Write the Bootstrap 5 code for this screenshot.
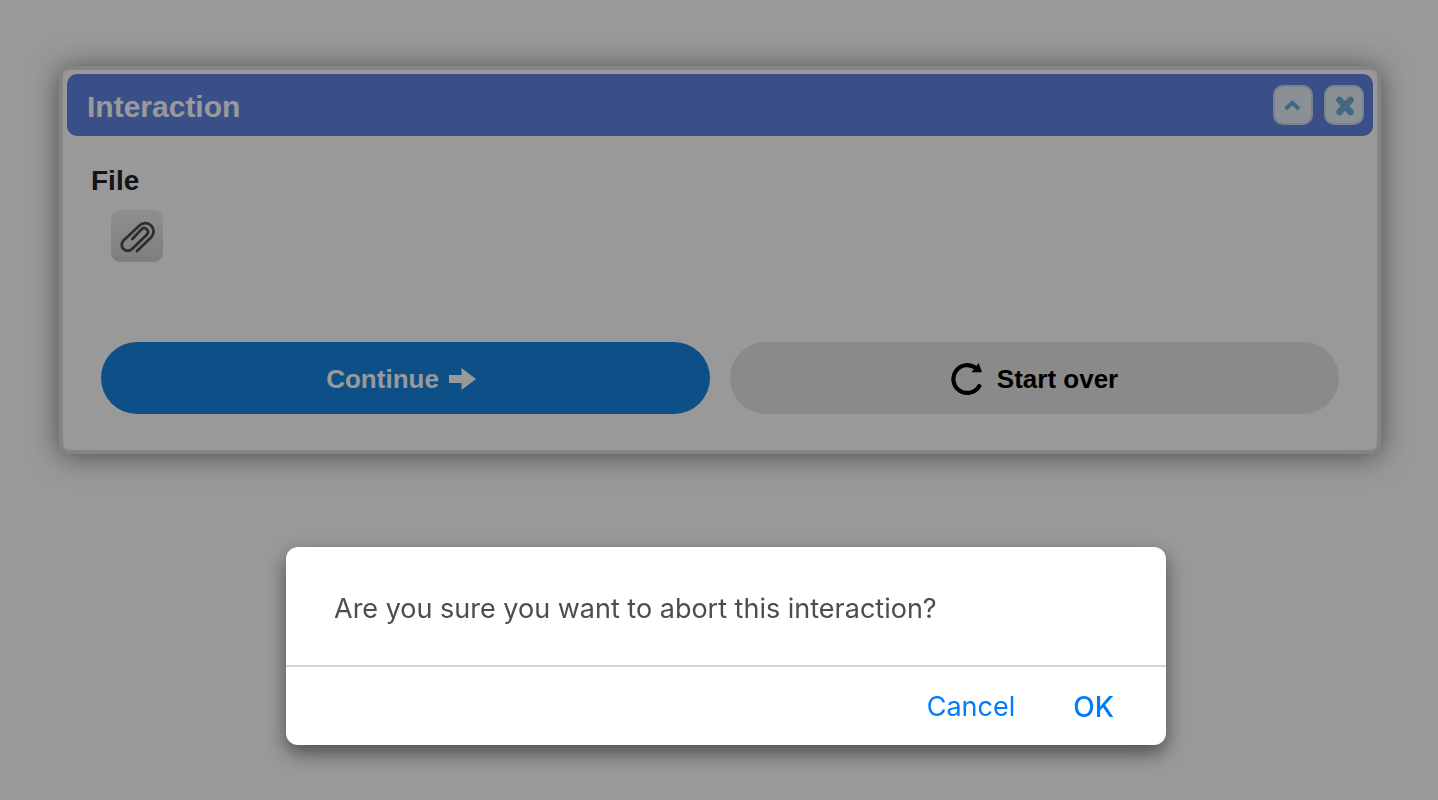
<!DOCTYPE html>
<html lang="en">
<head>
<meta charset="utf-8">
<meta name="viewport" content="width=device-width, initial-scale=1">
<title>Interaction</title>
<link href="https://cdn.jsdelivr.net/npm/bootstrap@5.3.0/dist/css/bootstrap.min.css" rel="stylesheet">
<style>
  body { background: #fff; font-family: "Liberation Sans", Arial, sans-serif; }
  .page-wrap { padding: 66px 57px 66px 59px; }
  .panel { border: 4px solid #dcdcdc; border-radius: 10px; padding: 4px; box-shadow: 0 2px 28px rgba(0,0,0,.5); }
  .panel-head { background: #6184e1; border-radius: 10px; height: 62px; padding: 0 9px 0 20px; }
  .panel-title { font-size: 30px; line-height: 36px; padding-top: 3px; color: #fff; }
  .tools { gap: 11px; }
  .tool-btn { width: 40px; height: 40px; border: 2px solid #c5dbec; border-radius: 10px; background: #e6f1f9; }
  .panel-main { padding: 27px 24px 32px; }
  .file-label { font-size: 28px; line-height: 36px; color: #222; }
  .attach { width: 52px; height: 52px; margin: 11px 20px 0; border: 0; border-radius: 9px; background: linear-gradient(#efefef, #d2d2d2); }
  .actions { gap: 20px; padding: 0 10px; margin-top: 80px; }
  .action { height: 72px; font-size: 26px; border: 0; padding: 8px 12px 6px; }
  .action-go, .action-go:hover { background: #1784e1; color: #fff; gap: 10px; padding-right: 21px; }
  .action-again, .action-again:hover { background: #e6e6e6; color: #000; gap: 14px; }
  .shade { background: rgba(0,0,0,.4); z-index: 10; }
  .dialog-area { z-index: 20; padding: 0 0 55px 14px; }
  .ask { width: 880px; max-width: 100%; background: #fff; border-radius: 12px; box-shadow: 0 8px 20px rgba(0,0,0,.5); font-family: Inter, "Liberation Sans", sans-serif; font-size: 27px; line-height: 36px; }
  .ask-text { padding: 44px 48px 38px; color: #4d4d4d; }
  .ask-foot { border-top: 2px solid #d4d4d4; padding: 22px 52px 20px; gap: 58px; }
  .ask-btn { background: none; border: 0; padding: 0; color: #007aff; }
  .ask-ok { font-weight: 500; font-size: 28px; }
</style>
</head>
<body>
<main class="page-wrap">
  <section class="panel bg-white">
    <header class="panel-head d-flex align-items-center justify-content-between">
      <h1 class="panel-title fw-bold m-0">Interaction</h1>
      <div class="tools d-flex">
        <button type="button" class="tool-btn d-flex align-items-center justify-content-center p-0" aria-label="Collapse">
          <svg width="36" height="36" viewBox="0 0 36 36" fill="none" stroke="#70b0d8" stroke-width="4"><path d="M10.500 22L17.200 15.800L24 22"/></svg>
        </button>
        <button type="button" class="tool-btn d-flex align-items-center justify-content-center p-0" aria-label="Close">
          <svg width="36" height="36" viewBox="0 0 36 36" fill="none" stroke="#70b0d8" stroke-width="6.500" stroke-linecap="round"><path d="M13.500 13L24.500 25M24.500 13L13.500 25"/></svg>
        </button>
      </div>
    </header>
    <div class="panel-main">
      <h2 class="file-label fw-bold m-0">File</h2>
      <button type="button" class="attach d-flex align-items-center justify-content-center p-0" aria-label="Attach file">
        <svg width="52" height="52" viewBox="0 0 52 52" fill="none" stroke="#4f4f4f" stroke-width="2.800" stroke-linecap="round"><path d="M26 41L40 27.500A8.300 8.300 0 0 0 28.500 15.500L12.500 30.500A6 6 0 0 0 21 39L36 24.500A3.800 3.800 0 0 0 30.800 19L21.300 29"/></svg>
      </button>
      <div class="actions d-flex">
        <button type="button" class="action action-go btn rounded-pill fw-bold d-flex align-items-center justify-content-center flex-fill w-50">Continue
          <svg width="27" height="22" viewBox="0 0 27 22" fill="#fff"><path d="M0 7H12.500V0L27 11L12.500 22V15H0Z"/></svg>
        </button>
        <button type="button" class="action action-again btn rounded-pill fw-bold d-flex align-items-center justify-content-center flex-fill w-50">
          <svg width="32" height="32" viewBox="0 0 32 32"><path d="M25 5.200A13.900 13.900 0 1 0 28.300 23" fill="none" stroke="#000" stroke-width="4.200" stroke-linecap="round"/><path d="M27.700 0L31 9.300H20.500Z"/></svg>
          Start over
        </button>
      </div>
    </div>
  </section>
</main>
<div class="shade position-fixed top-0 start-0 w-100 h-100"></div>
<div class="dialog-area position-fixed top-0 start-0 w-100 h-100 d-flex align-items-end justify-content-center">
  <div class="ask" role="alertdialog" aria-modal="true" aria-labelledby="ask-text">
    <p class="ask-text m-0" id="ask-text">Are you sure you want to abort this interaction?</p>
    <div class="ask-foot d-flex justify-content-end">
      <button type="button" class="ask-btn">Cancel</button>
      <button type="button" class="ask-btn ask-ok">OK</button>
    </div>
  </div>
</div>
<script src="https://cdn.jsdelivr.net/npm/bootstrap@5.3.0/dist/js/bootstrap.bundle.min.js"></script>
</body>
</html>
